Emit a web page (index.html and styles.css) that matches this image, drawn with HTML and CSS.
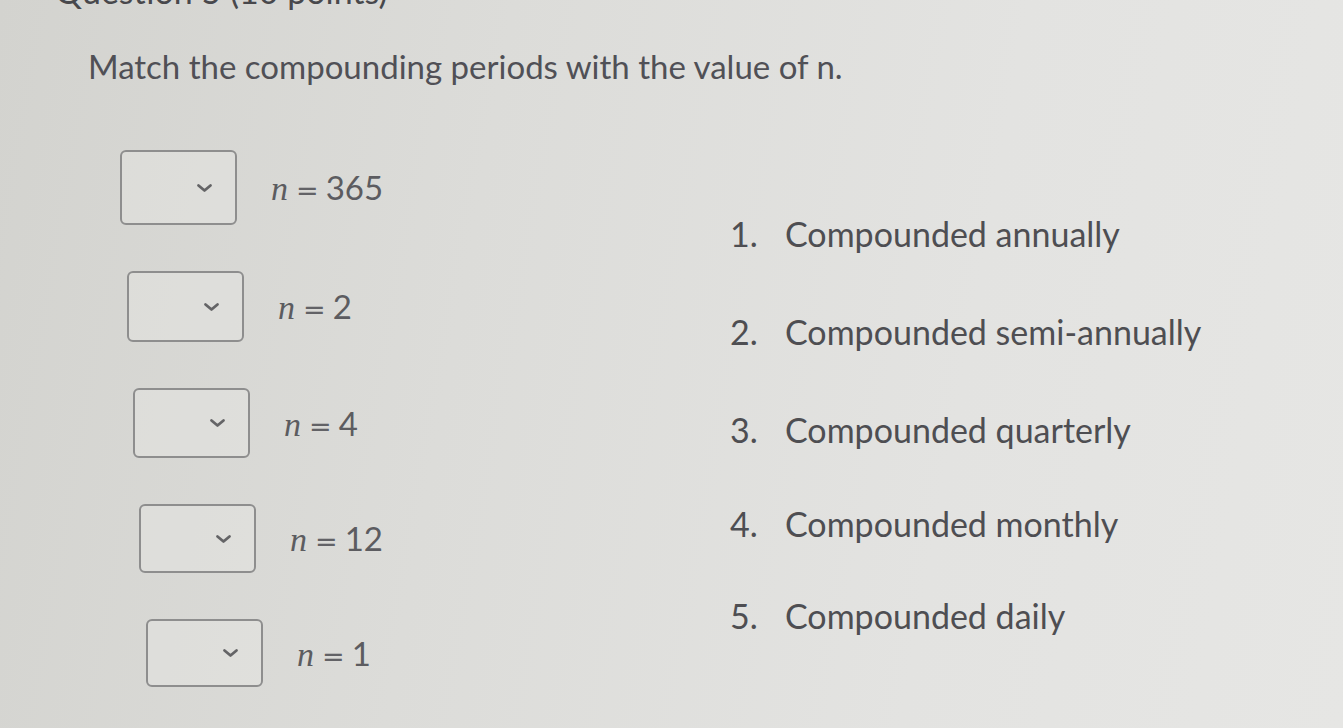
FILE: index.html
```html
<!DOCTYPE html>
<html>
<head>
<meta charset="utf-8">
<link rel="stylesheet" href="styles.css">
</head>
<body>
<div class="page">
  <div class="qhead">Question 5 (10 points)</div>
  <p class="prompt">Match the compounding periods with the value of n.</p>
  <div class="match">
    <div class="left">
      <div class="row r1"><div class="sel"><svg class="chev" viewBox="0 0 17 10" width="17" height="10"><path d="M2.5 2.5 L8.5 7.5 L14.5 2.5" fill="none" stroke="#646466" stroke-width="2.8" stroke-linecap="round" stroke-linejoin="round"/></svg></div><span class="eq"><i class="var">n</i><span class="op">=</span>365</span></div>
      <div class="row r2"><div class="sel"><svg class="chev" viewBox="0 0 17 10" width="17" height="10"><path d="M2.5 2.5 L8.5 7.5 L14.5 2.5" fill="none" stroke="#646466" stroke-width="2.8" stroke-linecap="round" stroke-linejoin="round"/></svg></div><span class="eq"><i class="var">n</i><span class="op">=</span>2</span></div>
      <div class="row r3"><div class="sel"><svg class="chev" viewBox="0 0 17 10" width="17" height="10"><path d="M2.5 2.5 L8.5 7.5 L14.5 2.5" fill="none" stroke="#646466" stroke-width="2.8" stroke-linecap="round" stroke-linejoin="round"/></svg></div><span class="eq"><i class="var">n</i><span class="op">=</span>4</span></div>
      <div class="row r4"><div class="sel"><svg class="chev" viewBox="0 0 17 10" width="17" height="10"><path d="M2.5 2.5 L8.5 7.5 L14.5 2.5" fill="none" stroke="#646466" stroke-width="2.8" stroke-linecap="round" stroke-linejoin="round"/></svg></div><span class="eq"><i class="var">n</i><span class="op">=</span>12</span></div>
      <div class="row r5"><div class="sel"><svg class="chev" viewBox="0 0 17 10" width="17" height="10"><path d="M2.5 2.5 L8.5 7.5 L14.5 2.5" fill="none" stroke="#646466" stroke-width="2.8" stroke-linecap="round" stroke-linejoin="round"/></svg></div><span class="eq"><i class="var">n</i><span class="op">=</span>1</span></div>
    </div>
    <ol class="choices">
      <li class="c1"><span class="num">1.</span><span>Compounded annually</span></li>
      <li class="c2"><span class="num">2.</span><span>Compounded semi-annually</span></li>
      <li class="c3"><span class="num">3.</span><span>Compounded quarterly</span></li>
      <li class="c4"><span class="num">4.</span><span>Compounded monthly</span></li>
      <li class="c5"><span class="num">5.</span><span>Compounded daily</span></li>
    </ol>
  </div>
</div>
</body>
</html>
```

FILE: styles.css
```css
html, body {
  margin: 0;
  padding: 0;
  height: 100%;
}
body {
  width: 1343px;
  height: 728px;
  overflow: hidden;
  background: linear-gradient(100deg, #d3d3cf 0%, #dcdcd9 35%, #e3e3e1 70%, #e6e6e4 100%);
  font-family: Lato, "Open Sans", sans-serif;
  color: #4e4e52;
}
.page {
  padding-left: 55px;
}
.qhead {
  font-size: 34px;
  line-height: 40px;
  margin-top: -29px;
  color: #48484c;
}
.prompt {
  margin: 35px 0 0 33px;
  font-size: 33px;
  line-height: 40px;
  color: #505056;
}
.match {
  display: flex;
  margin-top: 64px;
}
.left {
  display: flex;
  flex-direction: column;
  gap: 46px;
  width: 675px;
}
.row {
  display: flex;
  align-items: center;
  gap: 34px;
}
.r1 { margin-left: 65px; }
.r2 { margin-left: 72px; }
.r3 { margin-left: 78px; }
.r4 { margin-left: 84px; }
.r5 { margin-left: 91px; }
.sel {
  width: 117px;
  height: 70px;
  box-sizing: border-box;
  border: 2px solid #8e8e8e;
  border-radius: 6px;
  background: rgba(236, 236, 233, 0.35);
  display: flex;
  align-items: center;
  justify-content: flex-end;
  padding-right: 22px;
}
.r1 .sel { height: 75px; }
.r2 .sel { height: 71px; }
.r4 .sel { height: 69px; }
.r5 .sel { height: 68px; }
.chev { display: block; }
.eq {
  font-size: 33px;
  color: #5c5c60;
  white-space: nowrap;
}
.var {
  font-family: "Liberation Serif", "DejaVu Serif", serif;
  font-style: italic;
  font-size: 34px;
}
.op {
  font-family: "DejaVu Sans", sans-serif;
  font-size: 27px;
  margin: 0 7px 0 8px;
  color: #626266;
}
.choices {
  list-style: none;
  margin: 64px 0 0 0;
  padding: 0;
  display: flex;
  flex-direction: column;
  gap: 58px;
  font-size: 34px;
  line-height: 40px;
  color: #4e4e52;
}
.choices li {
  display: flex;
}
.num {
  width: 55px;
}
.c4 { margin-top: -4px; }
.c5 { margin-top: -6px; }
```
